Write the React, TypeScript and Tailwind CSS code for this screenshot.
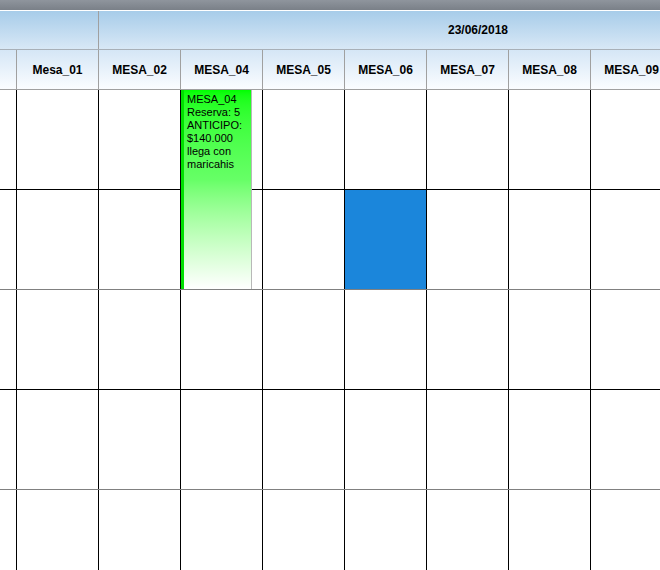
import React from 'react'

const cols = ['Mesa_01', 'MESA_02', 'MESA_04', 'MESA_05', 'MESA_06', 'MESA_07', 'MESA_08', 'MESA_09']

// bottom border colour of each slot row
const rows = ['border-black', 'border-[#808080]', 'border-black', 'border-[#808080]', 'border-black']

const App: React.FC = () => {
    return (
        <div className="w-[660px] h-[570px] overflow-hidden bg-white font-['Liberation_Sans',Arial,sans-serif] text-black relative">
            <div className="h-[10px] bg-gradient-to-b from-[#8f959d] to-[#7a8088]" />

            {/* day header */}
            <div className="flex h-[40px] border-t border-b border-t-white border-b-[#a8b0b8] bg-gradient-to-b from-[#a7cce9] to-[#d8e8f6]">
                <div className="w-[99px] shrink-0 border-r border-[#a0a0a0]" />
                <div className="w-[758px] shrink-0 flex items-center justify-center text-[12px] font-bold">
                    23/06/2018
                </div>
            </div>

            {/* resources */}
            <div className="flex h-[40px] border-b border-[#a0a0a0] bg-gradient-to-b from-[#d5e6f6] to-[#fbfdff]">
                <div className="w-[17px] shrink-0 border-r border-[#a0a0a0]" />
                {cols.map((c) => (
                    <div key={c} className="w-[82px] shrink-0 border-r border-[#a0a0a0] flex items-center justify-center text-[12px] font-bold">
                        {c}
                    </div>
                ))}
            </div>

            {/* slots */}
            {rows.map((b, i) => (
                <div key={i} className={`flex h-[100px] border-b ${b}`}>
                    <div className="w-[17px] shrink-0 border-r border-black" />
                    {cols.map((c, j) => (
                        <div
                            key={c}
                            className={`w-[82px] shrink-0 border-r border-black ${i === 1 && j === 4 ? 'bg-[#1b86db]' : ''}`}
                        />
                    ))}
                </div>
            ))}

            {/* reservation */}
            <div className="absolute left-[181px] top-[90px] w-[71px] h-[199px] border-l-[3px] border-r border-l-[#00e000] border-r-[#b8b8b8] bg-gradient-to-b from-[#00ff00] via-[#66ff66] via-45% to-[#ffffff] pl-[3px] pt-[3px] text-[11px] leading-[13px]">
                <p>MESA_04</p>
                <p>Reserva: 5</p>
                <p>ANTICIPO:</p>
                <p>$140.000</p>
                <p>llega con</p>
                <p>maricahis</p>
            </div>
        </div>
    )
}

export default App
